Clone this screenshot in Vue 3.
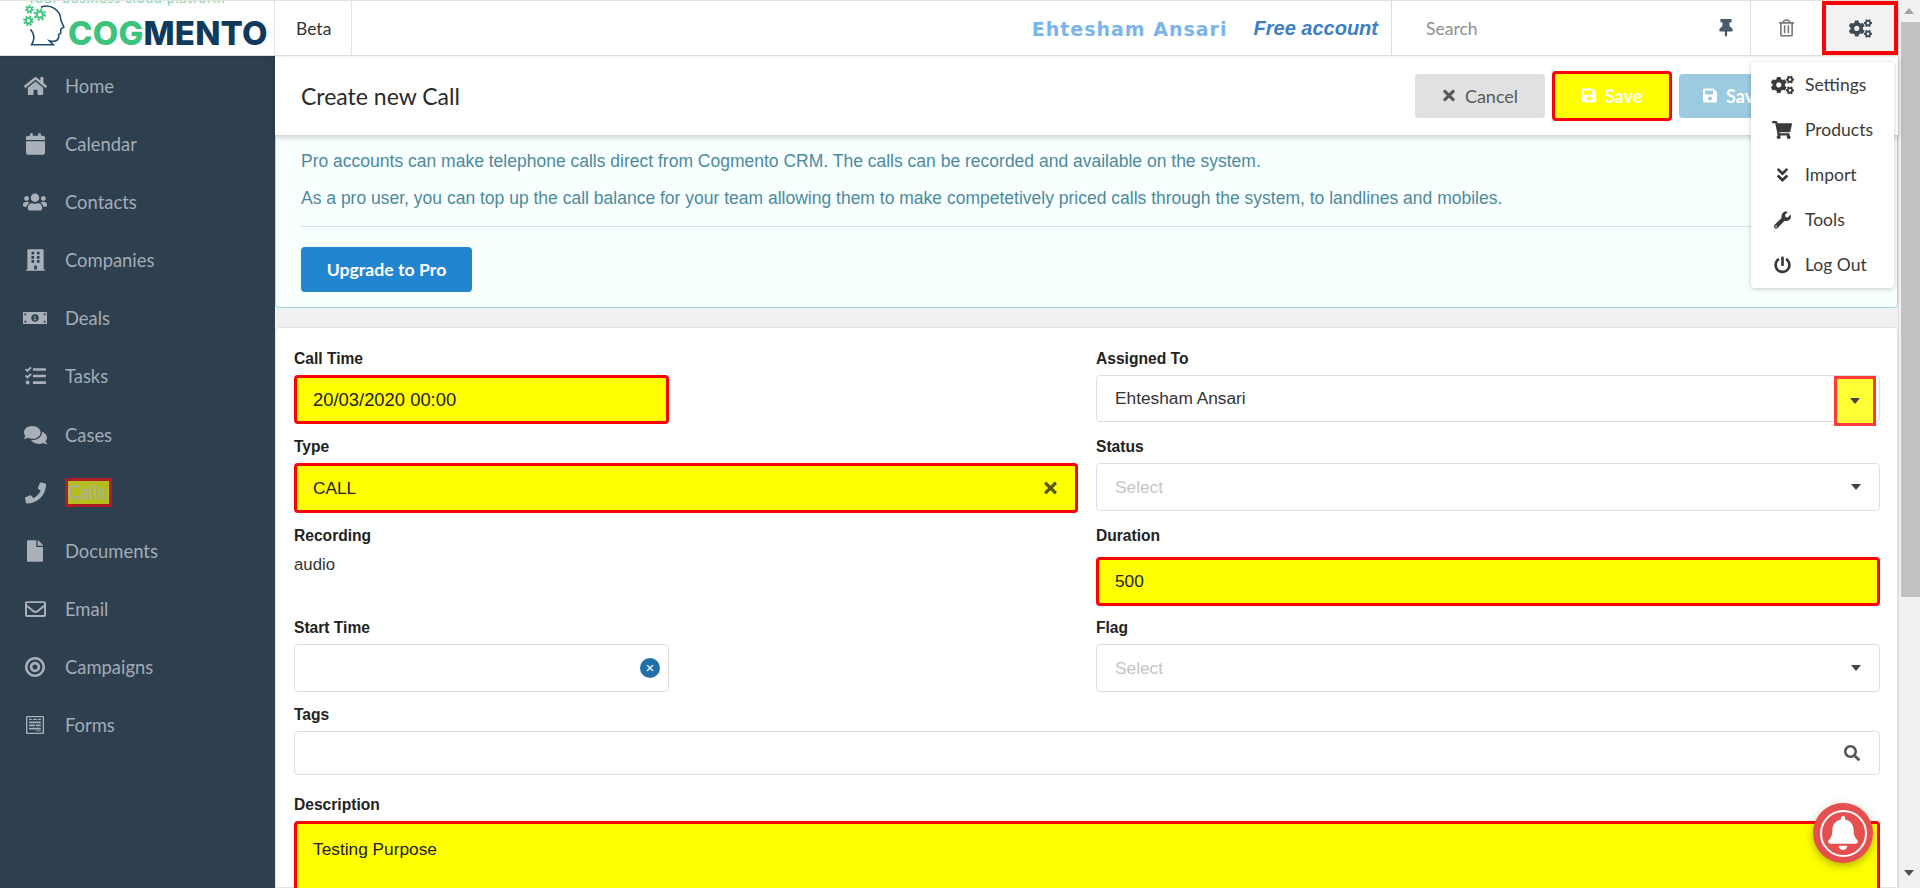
<template>
  <div class="shell">
    <div class="page">
      <header class="topbar">
        <div class="logo">
          <span class="tagline">Your business cloud platform</span>
          <svg class="head" width="46" height="48" viewBox="18 2 44 46">
            <path class="head-line" d="M38 8C47 4 57 11 57 20L60 27 57 29V33L55 34V37C54 41 50 41 46 40L50 44H29C33 37 31 33 28 29" />
            <g class="cog">
              <circle cx="27" cy="10" r="2.2" stroke-width="1.6" />
              <circle cx="27" cy="10" r="3.6" stroke-width="1.6" stroke-dasharray="1.6 1.6" />
              <circle cx="37" cy="15" r="3" stroke-width="2" />
              <circle cx="37" cy="15" r="5" stroke-width="2" stroke-dasharray="2 1.9" />
              <circle cx="26" cy="21" r="2.6" stroke-width="1.8" />
              <circle cx="26" cy="21" r="4.2" stroke-width="1.8" stroke-dasharray="1.8 1.5" />
            </g>
          </svg>
          <span class="brand"><span class="brand-cog">COG</span>MENTO</span>
        </div>
        <div class="beta">Beta</div>
        <div class="who">
          <span class="who-name">Ehtesham Ansari</span>
          <span class="who-plan">Free account</span>
        </div>
        <div class="search">
          <span>Search</span>
          <svg class="pin" :viewBox="icons.pin.vb"><path :d="icons.pin.d" /></svg>
        </div>
        <div class="trash">
          <svg :viewBox="icons.trash.vb"><path :d="icons.trash.d" /></svg>
        </div>
        <div class="gear">
          <svg :viewBox="icons.cogs.vb"><path :d="icons.cogs.d" /></svg>
        </div>
      </header>

      <div class="body">
        <nav class="sidebar">
          <a v-for="item in navItems" :key="item.label" class="nav-item">
            <span class="nav-icon">
              <svg :viewBox="icons[item.icon].vb" :style="{ width: item.size + 'px' }"><path :d="icons[item.icon].d" fill-rule="evenodd" /></svg>
            </span>
            <span :class="{ marked: item.label === 'Calls' }">{{ item.label }}</span>
          </a>
        </nav>

        <main class="content">
          <div class="page-head">
            <h1>Create new Call</h1>
            <div class="actions">
              <button class="btn btn-cancel">
                <svg :viewBox="icons.times.vb"><path :d="icons.times.d" /></svg>Cancel
              </button>
              <button class="btn btn-save">
                <svg :viewBox="icons.save.vb"><path :d="icons.save.d" /></svg>Save
              </button>
              <button class="btn btn-another">
                <svg :viewBox="icons.save.vb"><path :d="icons.save.d" /></svg>Save and Continue
              </button>
            </div>
          </div>

          <section class="notice">
            <p>Pro accounts can make telephone calls direct from Cogmento CRM. The calls can be recorded and available on the system.</p>
            <p>As a pro user, you can top up the call balance for your team allowing them to make competetively priced calls through the system, to landlines and mobiles.</p>
            <hr />
            <button class="upgrade">Upgrade to Pro</button>
          </section>

          <form class="card">
            <div class="field">
              <label>Call Time</label>
              <div class="control hot short">20/03/2020 00:00</div>
            </div>
            <div class="field">
              <label>Assigned To</label>
              <div class="control">
                Ehtesham Ansari
                <span class="caret-box"><i class="caret"></i></span>
              </div>
            </div>

            <div class="field">
              <label>Type</label>
              <div class="control hot tall">
                CALL
                <svg class="clear-x" :viewBox="icons.times.vb"><path :d="icons.times.d" /></svg>
              </div>
            </div>
            <div class="field">
              <label>Status</label>
              <div class="control placeholder">Select<i class="caret"></i></div>
            </div>

            <div class="field">
              <label>Recording</label>
              <div class="audio">audio</div>
            </div>
            <div class="field">
              <label>Duration</label>
              <div class="control hot duration">500</div>
            </div>

            <div class="field">
              <label>Start Time</label>
              <div class="control short">
                <span class="clear-dot">×</span>
              </div>
            </div>
            <div class="field">
              <label>Flag</label>
              <div class="control placeholder">Select<i class="caret"></i></div>
            </div>

            <div class="field wide">
              <label>Tags</label>
              <div class="control tags">
                <svg class="lens" :viewBox="icons.search.vb"><path :d="icons.search.d" /></svg>
              </div>
            </div>

            <div class="field wide">
              <label>Description</label>
              <div class="control hot area">Testing Purpose</div>
            </div>
          </form>
        </main>
      </div>
    </div>

    <div class="scrollbar">
      <i class="arrow-up"></i>
      <div class="thumb"></div>
      <i class="arrow-down"></i>
    </div>

    <ul class="menu">
      <li v-for="entry in menuItems" :key="entry.label">
        <span class="menu-icon">
          <svg :viewBox="icons[entry.icon].vb" :style="{ width: entry.size + 'px' }"><path :d="icons[entry.icon].d" /></svg>
        </span>
        {{ entry.label }}
      </li>
    </ul>

    <div class="bell">
      <div class="bell-ring">
        <svg :viewBox="icons.bell.vb"><path :d="icons.bell.d" /></svg>
      </div>
    </div>
  </div>
</template>

<script setup>
const icons = {
  home: { vb: "0 0 576 512", d: "M280.37 148.26L96 300.11V464a16 16 0 0 0 16 16l112.06-.29a16 16 0 0 0 15.92-16V368a16 16 0 0 1 16-16h64a16 16 0 0 1 16 16v95.64a16 16 0 0 0 16 16.05L464 480a16 16 0 0 0 16-16V300L295.67 148.26a12.19 12.19 0 0 0-15.3 0zM571.6 251.47L488 182.56V44.05a12 12 0 0 0-12-12h-56a12 12 0 0 0-12 12v72.61L318.47 43a48 48 0 0 0-61 0L4.34 251.47a12 12 0 0 0-1.6 16.9l25.5 31A12 12 0 0 0 45.15 301l235.22-193.74a12.19 12.19 0 0 1 15.3 0L530.9 301a12 12 0 0 0 16.9-1.6l25.5-31a12 12 0 0 0-1.7-16.93z" },
  calendar: { vb: "0 0 448 512", d: "M12 192h424c6.6 0 12 5.4 12 12v260c0 26.5-21.5 48-48 48H48c-26.5 0-48-21.5-48-48V204c0-6.6 5.4-12 12-12zm436-44v-36c0-26.5-21.5-48-48-48h-48V12c0-6.6-5.4-12-12-12h-40c-6.6 0-12 5.4-12 12v52H160V12c0-6.6-5.4-12-12-12h-40c-6.6 0-12 5.4-12 12v52H48C21.5 64 0 85.5 0 112v36c0 6.6 5.4 12 12 12h424c6.6 0 12-5.4 12-12z" },
  users: { vb: "0 0 640 512", d: "M96 224c35.3 0 64-28.7 64-64s-28.7-64-64-64-64 28.7-64 64 28.7 64 64 64zm448 0c35.3 0 64-28.7 64-64s-28.7-64-64-64-64 28.7-64 64 28.7 64 64 64zm32 32h-64c-17.6 0-33.5 7.1-45.1 18.6 40.3 22.1 68.9 62 75.1 109.4h66c17.7 0 32-14.3 32-32v-32c0-35.3-28.7-64-64-64zm-256 0c61.9 0 112-50.1 112-112S381.9 32 320 32 208 82.1 208 144s50.1 112 112 112zm76.8 32h-8.3c-20.8 10-43.9 16-68.5 16s-47.6-6-68.5-16h-8.3C179.6 288 128 339.6 128 403.2V432c0 26.5 21.5 48 48 48h288c26.5 0 48-21.5 48-48v-28.8c0-63.6-51.6-115.2-115.2-115.2zm-223.7-13.4C161.5 263.1 145.6 256 128 256H64c-35.3 0-64 28.7-64 64v32c0 17.7 14.3 32 32 32h65.9c6.3-47.4 34.9-87.3 75.2-109.4z" },
  building: { vb: "0 0 448 512", d: "M436 480h-20V24c0-13.255-10.745-24-24-24H56C42.745 0 32 10.745 32 24v456H12c-6.627 0-12 5.373-12 12v20h448v-20c0-6.627-5.373-12-12-12zM128 76c0-6.627 5.373-12 12-12h40c6.627 0 12 5.373 12 12v40c0 6.627-5.373 12-12 12h-40c-6.627 0-12-5.373-12-12V76zm0 96c0-6.627 5.373-12 12-12h40c6.627 0 12 5.373 12 12v40c0 6.627-5.373 12-12 12h-40c-6.627 0-12-5.373-12-12v-40zm52 148h-40c-6.627 0-12-5.373-12-12v-40c0-6.627 5.373-12 12-12h40c6.627 0 12 5.373 12 12v40c0 6.627-5.373 12-12 12zm76 160h-64v-84c0-6.627 5.373-12 12-12h40c6.627 0 12 5.373 12 12v84zm64-172c0 6.627-5.373 12-12 12h-40c-6.627 0-12-5.373-12-12v-40c0-6.627 5.373-12 12-12h40c6.627 0 12 5.373 12 12v40zm0-96c0 6.627-5.373 12-12 12h-40c-6.627 0-12-5.373-12-12v-40c0-6.627 5.373-12 12-12h40c6.627 0 12 5.373 12 12v40zm0-96c0 6.627-5.373 12-12 12h-40c-6.627 0-12-5.373-12-12V76c0-6.627 5.373-12 12-12h40c6.627 0 12 5.373 12 12v40z" },
  money: { vb: "0 0 52 26", d: "M1 0H51A1 1 0 0 1 52 1V25A1 1 0 0 1 51 26H1A1 1 0 0 1 0 25V1A1 1 0 0 1 1 0ZM26 5A8 8 0 1 0 26 21A8 8 0 1 0 26 5ZM25 9H27V16H29V18H23V16H25V11H23.5V10ZM3 3V7H7V3ZM45 3V7H49V3ZM3 19V23H7V19ZM45 19V23H49V19Z" },
  tasks: { vb: "0 0 512 512", d: "M139.61 35.5a12 12 0 0 0-17 0L58.93 98.81l-22.7-22.12a12 12 0 0 0-17 0L3.53 92.41a12 12 0 0 0 0 17l47.59 47.4a12.78 12.78 0 0 0 17.61 0l15.59-15.62L156.52 69a12.09 12.09 0 0 0 .09-17zm0 159.19a12 12 0 0 0-17 0l-63.68 63.72-22.7-22.1a12 12 0 0 0-17 0L3.53 252a12 12 0 0 0 0 17L51 316.5a12.77 12.77 0 0 0 17.6 0l15.7-15.69 72.2-72.22a12 12 0 0 0 .09-16.9zM64 368c-26.49 0-48.59 21.5-48.59 48S37.53 464 64 464a48 48 0 0 0 0-96zm432 16H208a16 16 0 0 0-16 16v32a16 16 0 0 0 16 16h288a16 16 0 0 0 16-16v-32a16 16 0 0 0-16-16zm0-320H208a16 16 0 0 0-16 16v32a16 16 0 0 0 16 16h288a16 16 0 0 0 16-16V80a16 16 0 0 0-16-16zm0 160H208a16 16 0 0 0-16 16v32a16 16 0 0 0 16 16h288a16 16 0 0 0 16-16v-32a16 16 0 0 0-16-16z" },
  comments: { vb: "0 0 576 512", d: "M416 192c0-88.4-93.1-160-208-160S0 103.6 0 192c0 34.3 14.1 65.9 38 92-13.4 30.2-35.5 54.2-35.8 54.5-2.2 2.3-2.8 5.7-1.5 8.7S4.8 352 8 352c36.6 0 66.9-12.3 88.7-25 32.2 15.7 70.3 25 111.3 25 114.9 0 208-71.6 208-160zm122 220c23.9-26 38-57.7 38-92 0-66.9-53.5-124.2-129.3-148.1.9 6.6 1.3 13.3 1.3 20.1 0 105.9-107.7 192-240 192-10.8 0-21.3-.8-31.7-1.9C207.8 439.6 281.8 480 368 480c41 0 79.1-9.2 111.3-25 21.8 12.7 52.1 25 88.7 25 3.2 0 6.1-1.9 7.3-4.8 1.3-2.9.7-6.3-1.5-8.7-.3-.3-22.4-24.2-35.8-54.5z" },
  phone: { vb: "0 0 512 512", d: "M493.4 24.6l-104-24c-11.3-2.6-22.9 3.3-27.5 13.9l-48 112c-4.2 9.8-1.4 21.3 6.9 28l60.6 49.6c-36 76.7-98.9 140.5-177.2 177.2l-49.6-60.6c-6.8-8.3-18.2-11.1-28-6.9l-112 48C3.9 366.5-2 378.1.6 389.4l24 104C27.1 504.2 36.7 512 48 512c256.1 0 464-207.5 464-464 0-11.2-7.7-20.9-18.6-23.4z" },
  file: { vb: "0 0 384 512", d: "M224 136V0H24C10.7 0 0 10.7 0 24v464c0 13.3 10.7 24 24 24h336c13.3 0 24-10.7 24-24V160H248c-13.2 0-24-10.8-24-24zm160-14.1v6.1H256V0h6.1c6.4 0 12.5 2.5 17 7l97.9 98c4.5 4.5 7 10.6 7 16.9z" },
  envelope: { vb: "0 0 512 512", d: "M464 64H48C21.49 64 0 85.49 0 112v288c0 26.51 21.49 48 48 48h416c26.51 0 48-21.49 48-48V112c0-26.51-21.49-48-48-48zm0 48v40.805c-22.422 18.259-58.168 46.651-134.587 106.49-16.841 13.247-50.201 45.072-73.413 44.701-23.208.375-56.579-31.459-73.413-44.701C106.18 199.465 70.425 171.067 48 152.805V112h416zM48 400V214.398c22.914 18.251 55.409 43.862 104.938 82.646 21.857 17.205 60.134 55.186 103.062 54.955 42.717.231 80.509-37.199 103.053-54.947 49.528-38.783 82.032-64.401 104.947-82.653V400H48z" },
  bullseye: { vb: "0 0 496 512", d: "M248 8C111.03 8 0 119.03 0 256s111.03 248 248 248 248-111.03 248-248S384.97 8 248 8zm0 432c-101.69 0-184-82.29-184-184 0-101.69 82.29-184 184-184 101.69 0 184 82.29 184 184 0 101.69-82.29 184-184 184zm0-312c-70.69 0-128 57.31-128 128s57.31 128 128 128 128-57.31 128-128-57.31-128-128-128zm0 192c-35.29 0-64-28.71-64-64s28.71-64 64-64 64 28.71 64 64-28.71 64-64 64z" },
  forms: { vb: "0 0 20 20", d: "M1 0H19A1 1 0 0 1 20 1V19A1 1 0 0 1 19 20H1A1 1 0 0 1 0 19V1A1 1 0 0 1 1 0ZM1.5 1.5V18.5H18.5V1.5ZM3.5 3H6L7.2 4.5 8.5 3H11.5L12.8 4.5 14 3H16.5V4.5H3.5ZM3.5 6H16.5V8H3.5ZM3.5 9.5H10V11.5H3.5ZM11 9.5H16.5V11.5H11ZM3.5 13H16.5V15H3.5ZM11 16H16.5V17H11Z" },
  pin: { vb: "0 0 384 512", d: "M298.028 214.267L285.793 96H328c13.255 0 24-10.745 24-24V24c0-13.255-10.745-24-24-24H56C42.745 0 32 10.745 32 24v48c0 13.255 10.745 24 24 24h42.207L85.972 214.267C37.465 236.82 0 277.261 0 328c0 13.255 10.745 24 24 24h136v104.007c0 1.242.289 2.467.845 3.578l24 48c2.941 5.882 11.364 5.893 14.311 0l24-48a8.008 8.008 0 0 0 .845-3.578V352h136c13.255 0 24-10.745 24-24-.001-51.183-37.983-91.42-85.973-113.733z" },
  trash: { vb: "0 0 448 512", d: "M268 416h24a12 12 0 0 0 12-12V188a12 12 0 0 0-12-12h-24a12 12 0 0 0-12 12v216a12 12 0 0 0 12 12zM432 80h-82.41l-34-56.7A48 48 0 0 0 274.41 0H173.59a48 48 0 0 0-41.16 23.3L98.41 80H16A16 16 0 0 0 0 96v16a16 16 0 0 0 16 16h16v336a48 48 0 0 0 48 48h288a48 48 0 0 0 48-48V128h16a16 16 0 0 0 16-16V96a16 16 0 0 0-16-16zM171.84 50.91A6 6 0 0 1 177 48h94a6 6 0 0 1 5.15 2.91L293.61 80H154.39zM368 464H80V128h288zm-212-48h24a12 12 0 0 0 12-12V188a12 12 0 0 0-12-12h-24a12 12 0 0 0-12 12v216a12 12 0 0 0 12 12z" },
  cogs: { vb: "0 0 640 512", d: "M512.1 191l-8.2 14.3c-3 5.3-9.4 7.5-15.1 5.4-11.8-4.4-22.6-10.7-32.1-18.6-4.6-3.8-5.8-10.5-2.8-15.7l8.2-14.3c-6.9-8-12.3-17.3-15.9-27.4h-16.5c-6 0-11.2-4.3-12.2-10.3-2-12-2.1-24.6 0-37.1 1-6 6.2-10.4 12.2-10.4h16.5c3.6-10.1 9-19.4 15.9-27.4l-8.2-14.3c-3-5.2-1.9-11.9 2.8-15.7 9.5-7.9 20.4-14.2 32.1-18.6 5.7-2.1 12.1.1 15.1 5.4l8.2 14.3c10.5-1.9 21.2-1.9 31.7 0L552 6.3c3-5.3 9.4-7.5 15.1-5.4 11.8 4.4 22.6 10.7 32.1 18.6 4.6 3.8 5.8 10.5 2.8 15.7l-8.2 14.3c6.9 8 12.3 17.3 15.9 27.4h16.5c6 0 11.2 4.3 12.2 10.3 2 12 2.1 24.6 0 37.1-1 6-6.2 10.4-12.2 10.4h-16.5c-3.6 10.1-9 19.4-15.9 27.4l8.2 14.3c3 5.2 1.9 11.9-2.8 15.7-9.5 7.9-20.4 14.2-32.1 18.6-5.7 2.1-12.1-.1-15.1-5.4l-8.2-14.3c-10.4 1.9-21.2 1.9-31.7 0zm-10.5-58.8c38.5 29.6 82.4-14.3 52.8-52.8-38.5-29.7-82.4 14.3-52.8 52.8zM386.3 286.1l33.7 16.8c10.1 5.8 14.5 18.1 10.5 29.1-8.9 24.2-26.4 46.4-42.6 65.8-7.4 8.9-20.2 11.1-30.3 5.3l-29.1-16.8c-16 13.7-34.6 24.6-54.9 31.7v33.6c0 11.6-8.3 21.6-19.7 23.6-24.6 4.2-50.4 4.4-75.9 0-11.5-2-20-11.9-20-23.6V418c-20.3-7.2-38.9-18-54.9-31.7L74 403c-10 5.8-22.9 3.6-30.3-5.3-16.2-19.4-33.3-41.6-42.2-65.7-4-10.9.4-23.2 10.5-29.1l33.3-16.8c-3.9-20.9-3.9-42.4 0-63.4L12 205.8c-10.1-5.8-14.6-18.1-10.5-29 8.9-24.2 26-46.4 42.2-65.8 7.4-8.9 20.2-11.1 30.3-5.3l29.1 16.8c16-13.7 34.6-24.6 54.9-31.7V57.1c0-11.5 8.2-21.5 19.6-23.5 24.6-4.2 50.5-4.4 76-.1 11.5 2 20 11.9 20 23.6v33.6c20.3 7.2 38.9 18 54.9 31.7l29.1-16.8c10-5.8 22.9-3.6 30.3 5.3 16.2 19.4 33.2 41.6 42.1 65.8 4 10.9.1 23.2-10 29.1l-33.7 16.8c3.9 21 3.9 42.5 0 63.5zm-117.6 21.1c59.2-77-28.7-164.9-105.7-105.7-59.2 77 28.7 164.9 105.7 105.7zm243.4 182.7l-8.2 14.3c-3 5.3-9.4 7.5-15.1 5.4-11.8-4.4-22.6-10.7-32.1-18.6-4.6-3.8-5.8-10.5-2.8-15.7l8.2-14.3c-6.9-8-12.3-17.3-15.9-27.4h-16.5c-6 0-11.2-4.3-12.2-10.3-2-12-2.1-24.6 0-37.1 1-6 6.2-10.4 12.2-10.4h16.5c3.6-10.1 9-19.4 15.9-27.4l-8.2-14.3c-3-5.2-1.9-11.9 2.8-15.7 9.5-7.9 20.4-14.2 32.1-18.6 5.7-2.1 12.1.1 15.1 5.4l8.2 14.3c10.5-1.9 21.2-1.9 31.7 0l8.2-14.3c3-5.3 9.4-7.5 15.1-5.4 11.8 4.4 22.6 10.7 32.1 18.6 4.6 3.8 5.8 10.5 2.8 15.7l-8.2 14.3c6.9 8 12.3 17.3 15.9 27.4h16.5c6 0 11.2 4.3 12.2 10.3 2 12 2.1 24.6 0 37.1-1 6-6.2 10.4-12.2 10.4h-16.5c-3.6 10.1-9 19.4-15.9 27.4l8.2 14.3c3 5.2 1.9 11.9-2.8 15.7-9.5 7.9-20.4 14.2-32.1 18.6-5.7 2.1-12.1-.1-15.1-5.4l-8.2-14.3c-10.4 1.9-21.2 1.9-31.7 0zM501.6 431c38.5 29.6 82.4-14.3 52.8-52.8-38.5-29.6-82.4 14.3-52.8 52.8z" },
  cart: { vb: "0 0 576 512", d: "M528.12 301.319l47.273-208C578.806 78.301 567.391 64 551.99 64H159.208l-9.166-44.81C147.758 8.021 137.93 0 126.529 0H24C10.745 0 0 10.745 0 24v16c0 13.255 10.745 24 24 24h69.883l70.248 343.435C147.325 417.1 136 435.222 136 456c0 30.928 25.072 56 56 56s56-25.072 56-56c0-15.674-6.447-29.835-16.824-40h209.647C430.447 426.165 424 440.326 424 456c0 30.928 25.072 56 56 56s56-25.072 56-56c0-22.172-12.888-41.332-31.579-50.405l5.517-24.276c3.413-15.018-8.002-29.319-23.403-29.319H218.117l-6.545-32h293.145c11.206 0 20.92-7.754 23.403-18.681z" },
  chevrons: { vb: "0 0 320 512", d: "M143 256.3L7 120.3c-9.4-9.4-9.4-24.6 0-33.9l22.6-22.6c9.4-9.4 24.6-9.4 33.9 0l96.4 96.4 96.4-96.4c9.4-9.4 24.6-9.4 33.9 0L313 86.3c9.4 9.4 9.4 24.6 0 33.9l-136 136c-9.4 9.5-24.6 9.5-34 .1zm34 192l136-136c9.4-9.4 9.4-24.6 0-33.9l-22.6-22.6c-9.4-9.4-24.6-9.4-33.9 0L160 352.1l-96.4-96.4c-9.4-9.4-24.6-9.4-33.9 0L7 278.3c-9.4 9.4-9.4 24.6 0 33.9l136 136c9.4 9.5 24.6 9.5 34 .1z" },
  wrench: { vb: "0 0 512 512", d: "M507.73 109.1c-2.24-9.03-13.54-12.09-20.12-5.51l-74.36 74.36-67.88-11.31-11.31-67.88 74.36-74.36c6.62-6.62 3.43-17.9-5.66-20.16-47.38-11.74-99.55.91-136.58 37.93-39.64 39.64-50.55 97.1-34.05 147.2L18.74 402.76c-24.99 24.99-24.99 65.51 0 90.5 24.99 24.99 65.51 24.99 90.5 0l213.21-213.21c50.12 16.71 107.47 5.68 147.37-34.22 37.07-37.07 49.7-89.32 37.91-136.73zM64 472c-13.25 0-24-10.75-24-24 0-13.26 10.75-24 24-24s24 10.74 24 24c0 13.25-10.75 24-24 24z" },
  power: { vb: "0 0 512 512", d: "M400 54.1c63 45 104 118.6 104 201.9 0 136.8-110.8 247.7-247.5 248C120 504.3 8.2 393 8 256.4 7.9 173.1 48.9 99.3 111.8 54.2c11.7-8.3 28-4.8 35 7.7L162.6 90c5.9 10.5 3.1 23.8-6.6 31-41.5 30.8-68 79.6-68 134.9-.1 92.3 74.5 168.1 168 168.1 91.6 0 168.6-74.2 168-169.1-.3-51.8-24.7-101.8-68.1-134-9.7-7.2-12.4-20.5-6.5-30.9l15.8-28.1c7-12.4 23.2-16.1 34.8-7.8zM296 264V24c0-13.3-10.7-24-24-24h-32c-13.3 0-24 10.7-24 24v240c0 13.3 10.7 24 24 24h32c13.3 0 24-10.7 24-24z" },
  times: { vb: "0 0 352 512", d: "M242.72 256l100.07-100.07c12.28-12.28 12.28-32.19 0-44.48l-22.24-22.24c-12.28-12.28-32.19-12.28-44.48 0L176 189.28 75.93 89.21c-12.28-12.28-32.19-12.28-44.48 0L9.21 111.45c-12.28 12.28-12.28 32.19 0 44.48L109.28 256 9.21 356.07c-12.28 12.28-12.28 32.19 0 44.48l22.24 22.24c12.28 12.28 32.2 12.28 44.48 0L176 322.72l100.07 100.07c12.28 12.28 32.2 12.28 44.48 0l22.24-22.24c12.28-12.28 12.28-32.19 0-44.48L242.72 256z" },
  save: { vb: "0 0 448 512", d: "M433.941 129.941l-83.882-83.882A48 48 0 0 0 316.118 32H48C21.49 32 0 53.49 0 80v352c0 26.51 21.49 48 48 48h352c26.51 0 48-21.49 48-48V163.882a48 48 0 0 0-14.059-33.941zM224 416c-35.346 0-64-28.654-64-64 0-35.346 28.654-64 64-64s64 28.654 64 64c0 35.346-28.654 64-64 64zm96-304.52V212c0 6.627-5.373 12-12 12H76c-6.627 0-12-5.373-12-12V108c0-6.627 5.373-12 12-12h228.52c3.183 0 6.235 1.264 8.485 3.515l3.48 3.48A11.996 11.996 0 0 1 320 111.48z" },
  search: { vb: "0 0 512 512", d: "M505 442.7L405.3 343c-4.5-4.5-10.6-7-17-7H372c27.6-35.3 44-79.7 44-128C416 93.1 322.9 0 208 0S0 93.1 0 208s93.1 208 208 208c48.3 0 92.7-16.4 128-44v16.3c0 6.4 2.5 12.5 7 17l99.7 99.7c9.4 9.4 24.6 9.4 33.9 0l28.3-28.3c9.4-9.4 9.4-24.6.1-34zM208 336c-70.7 0-128-57.2-128-128 0-70.7 57.2-128 128-128 70.7 0 128 57.2 128 128 0 70.7-57.2 128-128 128z" },
  bell: { vb: "0 0 448 512", d: "M224 512c35.32 0 63.97-28.65 63.97-64H160.03c0 35.35 28.65 64 63.97 64zm215.39-149.71c-19.32-20.76-55.47-51.99-55.47-154.29 0-77.7-54.48-139.9-127.94-155.16V32c0-17.67-14.32-32-31.98-32s-31.98 14.33-31.98 32v20.84C118.56 68.1 64.08 130.3 64.08 208c0 102.3-36.15 133.53-55.47 154.29-6 6.45-8.66 14.16-8.61 21.71.11 16.4 12.98 32 32.1 32h383.8c19.12 0 32-15.6 32.1-32 .05-7.55-2.61-15.27-8.61-21.71z" }
};

const navItems = [
  { label: "Home", icon: "home", size: 23 },
  { label: "Calendar", icon: "calendar", size: 19 },
  { label: "Contacts", icon: "users", size: 26 },
  { label: "Companies", icon: "building", size: 19 },
  { label: "Deals", icon: "money", size: 26 },
  { label: "Tasks", icon: "tasks", size: 21 },
  { label: "Cases", icon: "comments", size: 23 },
  { label: "Calls", icon: "phone", size: 21 },
  { label: "Documents", icon: "file", size: 16 },
  { label: "Email", icon: "envelope", size: 21 },
  { label: "Campaigns", icon: "bullseye", size: 20 },
  { label: "Forms", icon: "forms", size: 18 }
];

const menuItems = [
  { label: "Settings", icon: "cogs", size: 23 },
  { label: "Products", icon: "cart", size: 20 },
  { label: "Import", icon: "chevrons", size: 11 },
  { label: "Tools", icon: "wrench", size: 17 },
  { label: "Log Out", icon: "power", size: 17 }
];
</script>

<style>
html,
body {
  margin: 0;
  overflow: hidden;
}
</style>

<style scoped>
.shell {
  position: relative;
  display: flex;
  width: 1920px;
  height: 888px;
  overflow: hidden;
  font-family: Lato, sans-serif;
  color: #333;
}

.page {
  display: flex;
  flex-direction: column;
  width: 1898px;
  height: 888px;
}

/* top bar */
.topbar {
  position: relative;
  z-index: 3;
  display: flex;
  flex: none;
  height: 56px;
  box-sizing: border-box;
  background: #fff;
  border-top: 1px solid #e0e0e0;
  border-bottom: 1px solid #dcdcdc;
  box-shadow: 0 1px 2px rgba(0, 0, 0, 0.08);
}

.logo {
  position: relative;
  display: flex;
  width: 275px;
  box-sizing: border-box;
  padding-left: 20px;
  border-right: 1px solid #e4e4e4;
  overflow: hidden;
}

.tagline {
  position: absolute;
  top: -12px;
  left: 27px;
  font-size: 14.6px;
  letter-spacing: 0.5px;
  color: #7fd6ab;
  white-space: nowrap;
}

.head {
  flex: none;
  margin-top: 0;
}

.head-line {
  fill: none;
  stroke: #1f4a72;
  stroke-width: 1.5;
}

.cog circle {
  fill: none;
  stroke: #3cc47c;
}

.brand {
  margin: 12px 0 0 2px;
  font-family: Inter, sans-serif;
  font-size: 33px;
  font-weight: 800;
  line-height: 40px;
  letter-spacing: 0.2px;
  color: #0f3a5c;
}

.brand-cog {
  color: #3cc47c;
}

.beta {
  width: 77px;
  box-sizing: border-box;
  padding-left: 21px;
  border-right: 1px solid #e4e4e4;
  font-size: 17.5px;
  line-height: 55px;
}

.who {
  display: flex;
  flex: 1;
  align-items: center;
  justify-content: flex-end;
  gap: 26px;
  padding-right: 13px;
  font-family: "Liberation Sans", Arial, sans-serif;
  font-weight: 700;
}

.who-name {
  margin-top: 1px;
  font-family: "DejaVu Sans", sans-serif;
  font-size: 19px;
  letter-spacing: 1px;
  color: #7ab4ec;
}

.who-plan {
  font-size: 20px;
  font-style: italic;
  color: #3d7fc4;
}

.search {
  display: flex;
  align-items: center;
  justify-content: space-between;
  width: 360px;
  box-sizing: border-box;
  padding: 0 17px 0 34px;
  border-left: 1px solid #dcdcdc;
  border-right: 1px solid #dcdcdc;
  font-size: 17.5px;
  color: #8f8f8f;
}

.pin {
  width: 14px;
  height: 18px;
  fill: #4a5a68;
}

.trash {
  display: flex;
  align-items: center;
  justify-content: center;
  width: 71px;
}

.trash svg {
  width: 15px;
  height: 18px;
  fill: #777;
}

.gear {
  display: flex;
  align-items: center;
  justify-content: center;
  width: 76px;
  box-sizing: border-box;
  border: 4px solid #f00;
  background: #f2f2f2;
}

.gear svg {
  width: 23px;
  height: 19px;
  fill: #3e4c59;
}

/* sidebar */
.body {
  display: flex;
  flex: 1;
  min-height: 0;
}

.sidebar {
  flex: none;
  width: 275px;
  box-sizing: border-box;
  padding-top: 1px;
  background: #2e3f50;
}

.nav-item {
  display: flex;
  align-items: center;
  height: 58.09px;
  font-size: 18.4px;
  color: #a4acb6;
}

.nav-icon {
  display: flex;
  flex: none;
  align-items: center;
  justify-content: center;
  width: 24px;
  margin: 0 18px 0 23px;
}

.nav-icon svg {
  height: 24px;
  fill: #a9b0b9;
}

.marked {
  box-sizing: border-box;
  padding: 0 3px 0 0;
  border: 3px solid #b01c24;
  background: #b5be20;
  line-height: 23px;
}

/* page header */
.content {
  flex: 1;
  min-width: 0;
  background: #f1f1f1;
}

.page-head {
  position: relative;
  z-index: 2;
  display: flex;
  align-items: center;
  justify-content: space-between;
  height: 79px;
  box-sizing: border-box;
  padding: 0 8px 0 26px;
  background: #fff;
  box-shadow: 0 2px 6px rgba(0, 0, 0, 0.22);
}

.page-head h1 {
  margin: 0;
  font-size: 23px;
  font-weight: 400;
  color: #2a2a2a;
}

.actions {
  display: flex;
  align-items: center;
  gap: 7px;
}

.btn {
  display: flex;
  align-items: center;
  justify-content: center;
  gap: 9px;
  height: 44px;
  border: 0;
  border-radius: 4px;
  font-family: Lato, sans-serif;
  font-size: 18px;
  font-weight: 700;
}

.btn svg {
  width: 14px;
  height: 17px;
}

.btn-cancel {
  width: 130px;
  background: #e0e1e2;
  color: #5a5a5a;
  font-weight: 400;
  fill: #5a5a5a;
}

.btn-save {
  width: 120px;
  height: 50px;
  box-sizing: border-box;
  border: 3px solid #f00;
  background: #ff0;
  color: #fff;
  fill: #fff;
}

.btn-another {
  justify-content: flex-start;
  width: 211px;
  padding-left: 24px;
  background: #9ccae1;
  color: #fff;
  fill: #fff;
}

/* pro notice */
.notice {
  box-sizing: border-box;
  height: 173px;
  padding: 15px 25px 0;
  border: 1px solid #a9d5de;
  border-top: 0;
  border-radius: 0 0 4px 4px;
  background: #f8ffff;
  font-family: "Liberation Sans", Arial, sans-serif;
  font-size: 17.5px;
  line-height: 22px;
  color: #4d8a9b;
}

.notice p {
  margin: 0 0 15px;
}

.notice hr {
  height: 1px;
  margin: 17px 0 20px;
  border: 0;
  background: #d9dfe0;
}

.upgrade {
  width: 171px;
  height: 45px;
  border: 0;
  border-radius: 4px;
  background: #2185d0;
  color: #fff;
  font-family: Lato, sans-serif;
  font-size: 17.7px;
  font-weight: 700;
}

/* form */
.card {
  display: grid;
  grid-template-columns: 784px 784px;
  grid-template-rows: 88px 89px 92px 87px 90px auto;
  column-gap: 18px;
  height: 561px;
  box-sizing: border-box;
  margin: 19px 0 0;
  padding: 22px 18px 0;
  border: 1px solid #e2e2e2;
  border-radius: 4px 4px 0 0;
  background: #fff;
  font-family: "Liberation Sans", Arial, sans-serif;
}

.field label {
  display: block;
  margin-bottom: 7px;
  font-size: 15.6px;
  font-weight: 700;
  line-height: 18px;
  color: #222;
}

.wide {
  grid-column: 1 / 3;
}

.control {
  position: relative;
  display: flex;
  align-items: center;
  justify-content: space-between;
  height: 47px;
  box-sizing: border-box;
  padding: 0 18px;
  border: 1.2px solid #dedede;
  border-radius: 4px;
  font-size: 17.3px;
  color: #333;
}

.short {
  width: 375px;
  height: 48px;
}

.placeholder {
  height: 48px;
  color: #c4c4c4;
}

.tags {
  height: 44px;
}

.hot {
  padding: 0 16px;
  border: 3px solid #f00;
  background: #ff0;
  color: #222;
}

.tall {
  height: 50px;
}

.short.hot {
  height: 49px;
  font-size: 18.4px;
}

.duration {
  height: 49px;
  margin-top: 12px;
}

.area {
  align-items: flex-start;
  height: 90px;
  padding-top: 14px;
  line-height: 22px;
}

.audio {
  margin-top: 10px;
  font-size: 16.8px;
  color: #333;
}

.caret {
  width: 0;
  height: 0;
  border-style: solid;
  border-width: 6px 5px 0;
  border-color: #444 transparent transparent;
}

.caret-box {
  position: absolute;
  top: 0;
  right: 3px;
  display: flex;
  align-items: center;
  justify-content: center;
  width: 42px;
  height: 50px;
  box-sizing: border-box;
  border: 3px solid #ff3a3a;
  background: #ffff36;
}

.clear-x {
  width: 13px;
  height: 18px;
  margin-right: 2px;
  fill: #55550f;
}

.clear-dot {
  position: absolute;
  top: 13px;
  right: 8px;
  width: 20px;
  height: 20px;
  border-radius: 50%;
  background: #1f6fa8;
  color: #fff;
  font-size: 15px;
  line-height: 19px;
  text-align: center;
}

.lens {
  width: 16px;
  height: 16px;
  margin-left: auto;
  margin-right: 1px;
  fill: #555;
}

/* drawn scrollbar */
.scrollbar {
  position: relative;
  flex: none;
  width: 22px;
  background: #f1f1f1;
  box-shadow: inset 1px 0 0 #dcdcdc;
}

.thumb {
  position: absolute;
  top: 22px;
  left: 3px;
  right: 0;
  height: 575px;
  background: #c1c1c1;
}

.arrow-up,
.arrow-down {
  position: absolute;
  left: 6px;
  width: 0;
  height: 0;
  border-style: solid;
}

.arrow-up {
  top: 8px;
  border-width: 0 5px 6px;
  border-color: transparent transparent #a3a3a3;
}

.arrow-down {
  bottom: 12px;
  border-width: 6px 5px 0;
  border-color: #505050 transparent transparent;
}

/* settings dropdown */
.menu {
  position: absolute;
  top: 62px;
  left: 1751px;
  z-index: 4;
  width: 143px;
  height: 226px;
  box-sizing: border-box;
  margin: 0;
  padding: 0;
  border-radius: 4px;
  background: #fff;
  box-shadow: 0 1px 5px rgba(0, 0, 0, 0.22);
  font-size: 17.5px;
  list-style: none;
  color: #3a3a3a;
}

.menu li {
  display: flex;
  align-items: center;
  height: 45px;
}

.menu-icon {
  display: flex;
  flex: none;
  align-items: center;
  justify-content: center;
  width: 24px;
  margin: 0 11px 0 19px;
}

.menu-icon svg {
  height: 20px;
  fill: #3a3a3a;
}

/* notification bell */
.bell {
  position: absolute;
  top: 803px;
  left: 1813px;
  z-index: 4;
  display: flex;
  align-items: center;
  justify-content: center;
  width: 60px;
  height: 60px;
  border-radius: 50%;
  background: #e64f50;
  box-shadow: 0 3px 8px rgba(90, 90, 20, 0.45);
}

.bell-ring {
  display: flex;
  align-items: center;
  justify-content: center;
  width: 47px;
  height: 47px;
  box-sizing: border-box;
  border: 2px solid #fff;
  border-radius: 50%;
}

.bell-ring svg {
  width: 30px;
  height: 34px;
  fill: #fff;
}
</style>
